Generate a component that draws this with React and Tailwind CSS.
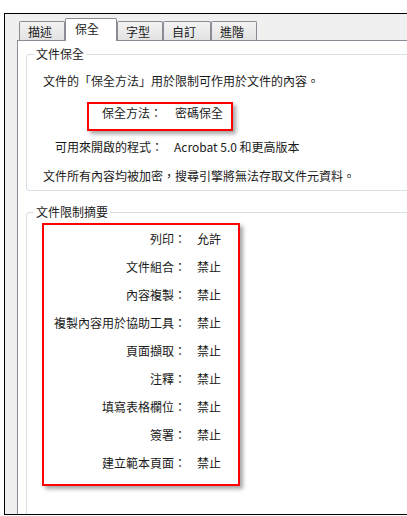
export default function App() {
  const font = { fontFamily: '"Noto Sans CJK TC", "Noto Sans", sans-serif' };
  const rows = [
    ["列印：", "允許"],
    ["文件組合：", "禁止"],
    ["內容複製：", "禁止"],
    ["複製內容用於協助工具：", "禁止"],
    ["頁面擷取：", "禁止"],
    ["注釋：", "禁止"],
    ["填寫表格欄位：", "禁止"],
    ["簽署：", "禁止"],
    ["建立範本頁面：", "禁止"],
  ];
  const tabs = [
    { t: "描述", w: "w-[46px]" },
    { t: "保全", w: "w-[52px]", sel: true },
    { t: "字型", w: "w-[46px]" },
    { t: "自訂", w: "w-[48px]" },
    { t: "進階", w: "w-[46px]" },
  ];
  return (
    <div className="w-[407px] h-[516px] bg-white overflow-hidden text-[12px] leading-[16px] text-[#1a1a1a]" style={font}>
      <div className="mt-[13px] ml-[4px] h-[502px] border-t border-l border-b border-black bg-[#f0f0f0] flex flex-col">
        <div className="h-[26px] pl-[14px] flex items-end shrink-0">
          {tabs.map((tab) =>
            tab.sel ? (
              <div
                key={tab.t}
                className={`${tab.w} h-[23px] -mb-[1px] relative z-10 bg-white border-t border-l border-r border-[#898c95] rounded-t-[2px] pl-[9px] pt-[2px]`}
              >
                {tab.t}
              </div>
            ) : (
              <div
                key={tab.t}
                className={`${tab.w} h-[19px] bg-linear-to-b from-[#f3f3f3] to-[#e2e2e2] border-t border-l border-r border-[#898c95] rounded-t-[2px] pl-[8px] pt-[2px]`}
              >
                {tab.t}
              </div>
            )
          )}
        </div>
        <div className="ml-[12px] flex-1 border-t border-l border-[#898c95] bg-white overflow-hidden">
          <div className="ml-[8px] mt-[13px] w-[420px] h-[137px] border border-[#d5dfe5] rounded-[3px] relative pl-[16px] pt-[18px]">
            <div className="absolute left-[7px] -top-[9px] bg-white px-[2px]">文件保全</div>
            <div>文件的「保全方法」用於限制可作用於文件的內容。</div>
            <div className="ml-[44px] mt-[13px] w-[146px] h-[29px] border-2 border-[#ff0000] shadow-[3px_3px_4px_rgba(0,0,0,0.35)] flex pt-[1px]">
              <div className="w-[73px] text-right">保全方法：</div>
              <div className="ml-[13px]">密碼保全</div>
            </div>
            <div className="mt-[8px] flex">
              <div className="w-[120px] text-right">可用來開啟的程式：</div>
              <div className="ml-[11px]">Acrobat 5.0 和更高版本</div>
            </div>
            <div className="mt-[13px]">文件所有內容均被加密，搜尋引擎將無法存取文件元資料。</div>
          </div>
          <div className="ml-[8px] mt-[21px] w-[420px] h-[320px] border border-[#d5dfe5] rounded-[3px] relative pl-[15px] pt-[10px]">
            <div className="absolute left-[7px] -top-[9px] bg-white px-[2px]">文件限制摘要</div>
            <div className="w-[198px] h-[263px] border-2 border-[#ff0000] shadow-[3px_3px_4px_rgba(0,0,0,0.35)] pt-[6px] flex flex-col gap-[12px]">
              {rows.map(([k, v]) => (
                <div key={k} className="flex">
                  <div className="w-[142px] text-right">{k}</div>
                  <div className="ml-[11px]">{v}</div>
                </div>
              ))}
            </div>
          </div>
        </div>
      </div>
    </div>
  );
}
